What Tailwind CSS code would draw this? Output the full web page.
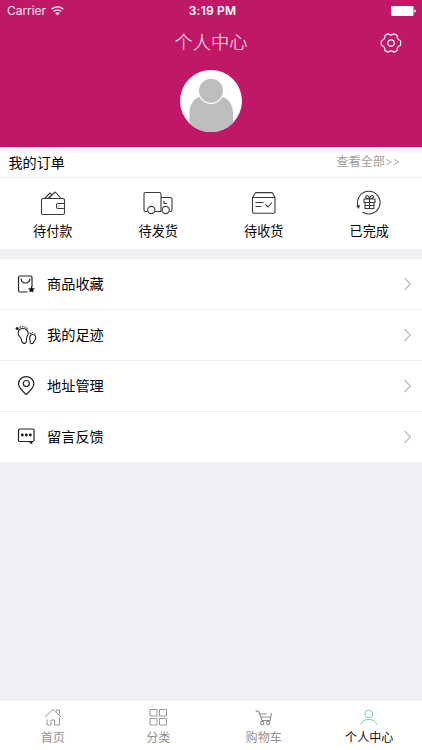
<!DOCTYPE html>
<html lang="zh-CN">
<head>
<meta charset="utf-8">
<meta name="viewport" content="width=device-width, initial-scale=1">
<title>个人中心</title>
<script src="https://cdn.jsdelivr.net/npm/@tailwindcss/browser@4"></script>
</head>
<body class="bg-[#efeff4]">
<div class="w-[422px] h-[750px] flex flex-col overflow-hidden bg-[#efeff4] text-black font-['Inter','Noto_Sans_CJK_SC',sans-serif]">
  <header class="h-[147px] shrink-0 bg-[#bf1866] text-white flex flex-col">
    <div class="h-[22px] grid grid-cols-3 items-center text-[12px] leading-[22px]">
      <div class="flex items-center pl-[7px] gap-[5px] text-white/90"><span class="tracking-[-0.05px]">Carrier</span>
        <svg class="w-[13px] h-[10px]" viewBox="0 0 13 10" fill="none" stroke="currentColor" stroke-width="1.5"><path d="M.7 3.2q5.8-4.7 11.6 0M2.7 5.5q3.8-3 7.6 0"/><path d="M4.2 7.1q2.3-1.6 4.6 0L6.5 9.5z" fill="currentColor" stroke="none"/></svg>
      </div>
      <div class="text-center font-semibold tracking-[0.2px] pl-[3px]">3:19 PM</div>
      <div class="flex justify-end pr-[6px]"><svg class="w-[25px] h-[10px]" viewBox="0 0 25 10" fill="white"><rect width="22.5" height="10" rx="1.2"/><path d="M23.3 3.2q1.5.3 1.5 1.8t-1.5 1.8z"/></svg></div>
    </div>
    <div class="h-[41px] grid grid-cols-3 items-center">
      <span></span>
      <h1 class="text-center text-[18.3px] leading-[41px] font-light whitespace-nowrap">个人中心</h1>
      <div class="flex justify-end pr-[20px]">
        <svg class="w-[22px] h-[22px]" viewBox="0 0 22 22" fill="none" stroke="white" stroke-width="1.2" stroke-linejoin="round"><path d="M8 1.800Q11 4.300 14 1.800L17.200 3.600Q16.500 7.200 20.600 8.700V13.300Q16.500 14.800 17.200 18.400L14 20.200Q11 17.700 8 20.200L4.800 18.400Q5.500 14.800 1.400 13.300V8.700Q5.500 7.200 4.800 3.600Z"/><circle cx="11" cy="11" r="3.2"/></svg>
      </div>
    </div>
    <div class="flex justify-center pt-[7px]">
      <div class="w-[62px] h-[62px] rounded-full bg-white overflow-hidden">
        <svg class="w-[62px] h-[62px]" viewBox="0 0 62 62"><path d="M9.500 62V43Q9.500 25 31 25T53 43V62z" fill="#bdbdbd"/><circle cx="31" cy="20.700" r="12.600" fill="#bdbdbd" stroke="white" stroke-width="1.200"/></svg>
      </div>
    </div>
  </header>

  <section class="h-[102px] shrink-0 bg-white">
    <div class="h-[31px] border-b border-[#efeff1] flex items-center justify-between pl-[8.500px] pr-[22px]">
      <h2 class="text-[14.1px] leading-[30px] pt-[1px]">我的订单</h2>
      <span class="text-[12.200px] text-[#a0a0a0] pt-[1px]">查看全部<span class="text-[11.500px] font-light">&gt;&gt;</span></span>
    </div>
    <div class="grid grid-cols-4 pt-[11px] text-[13.1px] leading-[20px]">
      <div class="flex flex-col items-center gap-[4px]">
        <svg class="w-[30px] h-[28px]" viewBox="38 189 30 28" fill="none" stroke="#3b3b3b" stroke-width="1.1" stroke-linejoin="round"><rect x="41.5" y="198.5" width="23" height="16" rx="1.5"/><path d="M44.5 198.5L50 193l2 1.8M48 198.500L55.200 192l6 6.500M49.500 198l3-3.500M64.500 203.500H58q-1.500 0-1.500 1.500v2q0 1.500 1.500 1.500h6.500M59 205.500v1"/></svg>
        <span>待付款</span>
      </div>
      <div class="flex flex-col items-center gap-[4px]">
        <svg class="w-[30px] h-[28px]" viewBox="143.500 189 30 28" fill="none" stroke="#3b3b3b" stroke-width="1.1" stroke-linejoin="round"><path d="M148 211.500h-2q-1.500 0-1.500-1.500v-16q0-1.500 1.500-1.500h14q1.500 0 1.500 1.500v17.500H155.500M161.500 197.500h9q2 0 2 2v10.500q0 1.500-1.500 1.500h-1.200M164.500 201v2.500h3"/><circle cx="151.800" cy="210" r="3.600"/><circle cx="166.200" cy="210" r="3.600" fill="white"/></svg>
        <span>待发货</span>
      </div>
      <div class="flex flex-col items-center gap-[4px]">
        <svg class="w-[30px] h-[28px]" viewBox="249 189 30 28" fill="none" stroke="#3b3b3b" stroke-width="1.1" stroke-linejoin="round"><path d="M252.500 197.500L255 193.500q.5-.9 1.500-.9h14.800q1 0 1.500.9l2.200 4v14.200q0 1.500-1.500 1.500h-19.500q-1.500 0-1.500-1.500zM252.500 197.500h22.500M255.500 202.500h8M255.500 206.500h6M265.500 204.500l2.500 2.500 4-4.500"/></svg>
        <span>待收货</span>
      </div>
      <div class="flex flex-col items-center gap-[4px]">
        <svg class="w-[30px] h-[28px]" viewBox="354.500 189 30 28" fill="none" stroke="#3b3b3b" stroke-width="1.1" stroke-linejoin="round"><path d="M358.500 206a11.300 11.300 0 1 1 4.500 6"/><path d="M356.500 205.800l4.200-.5-1.500 3.800z" fill="#3b3b3b" stroke="none"/><path d="M364.500 199h11v3.500h-11zM365.500 202.500v6h9v-6M370 199v9.500M370 199c-5 0-4.500-4-2-3.500q1.500.5 2 3.500c.5-3 1.500-3.500 2.500-3.500 2.500 0 2 3.500-2.500 3.500M365.500 205.500h9"/></svg>
        <span>已完成</span>
      </div>
    </div>
  </section>

  <nav class="mt-[10px] h-[203px] shrink-0 bg-white text-[14.2px]">
    <a class="h-[51px] border-b border-[#efeff1] flex items-center pl-[14px] pr-[10px]">
      <svg class="w-[24px] h-[24px] mr-[9px]" viewBox="14 272 24 24" fill="none" stroke="#222" stroke-width="1.2" stroke-linejoin="round"><path d="M32 287v-9.500q0-1.500-1.500-1.500H20q-1.500 0-1.500 1.500V290.500q0 1.500 1.500 1.500h7.500M21 278.500q.3 4.500 4.500 4.500t4.500-4.500"/><path d="M31.500 286l1 2.200 2.400.3-1.800 1.700.5 2.400-2.100-1.200-2.100 1.200.5-2.400-1.800-1.700 2.400-.3z" fill="#111" stroke="none"/></svg>
      <span class="flex-1">商品收藏</span>
      <svg class="w-[9px] h-[14px]" viewBox="0 0 9 14" fill="none" stroke="#bcbcc0" stroke-width="1.2"><path d="M1.500 1L7.300 7l-5.800 6"/></svg>
    </a>
    <a class="h-[51px] border-b border-[#efeff1] flex items-center pl-[14px] pr-[10px]">
      <svg class="w-[24px] h-[24px] mr-[9px]" viewBox="14 323 24 24" fill="none" stroke="#222" stroke-width="1.100"><path d="M23 328.500c3 0 5.300 2.300 5.200 5.200-.1 2.200-1.700 3-1.700 4.800 0 2.200.5 4.700-1.800 4.900-2.700.2-3.200-2-3.400-4.300-.2-2.300-3.200-2.600-3.200-5.800 0-2.800 2-4.800 4.900-4.800zM33 334.500c2.200.1 3 2.200 2.700 4-.3 1.500-1.300 1.800-1.600 2.900-.4 1.500-.8 2.300-2.300 2.200-1.600-.1-1.900-1.300-1.700-2.700.2-1.300-.6-1.700-.5-3 .2-1.900 1.300-3.500 3.400-3.400z"/><g fill="#222" stroke="none"><circle cx="17.200" cy="328.500" r="1.600"/><circle cx="20.200" cy="327" r=".8"/><circle cx="22.700" cy="326.500" r=".7"/><circle cx="25" cy="327" r=".7"/><circle cx="27" cy="328.200" r=".7"/><circle cx="30.500" cy="333.300" r=".9"/><circle cx="32.800" cy="332.500" r=".6"/><circle cx="35" cy="333.700" r=".6"/></g></svg>
      <span class="flex-1">我的足迹</span>
      <svg class="w-[9px] h-[14px]" viewBox="0 0 9 14" fill="none" stroke="#bcbcc0" stroke-width="1.2"><path d="M1.500 1L7.300 7l-5.800 6"/></svg>
    </a>
    <a class="h-[51px] border-b border-[#efeff1] flex items-center pl-[14px] pr-[10px]">
      <svg class="w-[24px] h-[24px] mr-[9px]" viewBox="14 374 24 24" fill="none" stroke="#222" stroke-width="1.200" stroke-linejoin="round"><path d="M26.200 394.500q-7.700-6.800-7.700-10.700a7.700 7.200 0 0 1 15.400 0q0 3.900-7.700 10.700z"/><circle cx="26.300" cy="383.500" r="3"/></svg>
      <span class="flex-1">地址管理</span>
      <svg class="w-[9px] h-[14px]" viewBox="0 0 9 14" fill="none" stroke="#bcbcc0" stroke-width="1.2"><path d="M1.500 1L7.300 7l-5.800 6"/></svg>
    </a>
    <a class="h-[50px] flex items-center pl-[14px] pr-[10px]">
      <svg class="w-[24px] h-[24px] mr-[9px]" viewBox="14 425 24 24" fill="none" stroke="#222" stroke-width="1.200" stroke-linejoin="round"><rect x="18.500" y="429" width="15.500" height="12.500" rx="1.200"/><path d="M28.500 441.500h3.500v2.500z" fill="#222" stroke-width=".7"/><g fill="#111" stroke="none"><circle cx="22.300" cy="435" r="1.400"/><circle cx="26.300" cy="435" r="1.400"/><circle cx="30.300" cy="435" r="1.400"/></g></svg>
      <span class="flex-1">留言反馈</span>
      <svg class="w-[9px] h-[14px]" viewBox="0 0 9 14" fill="none" stroke="#bcbcc0" stroke-width="1.2"><path d="M1.500 1L7.300 7l-5.800 6"/></svg>
    </a>
  </nav>

  <footer class="mt-auto h-[49px] shrink-0 bg-white grid grid-cols-4 pt-[6px] text-[12.100px] leading-[18px] text-[#929292]">
    <div class="flex flex-col items-center gap-[2px]">
      <svg class="w-[20px] h-[20px]" viewBox="43 707 20 20" fill="none" stroke="#999" stroke-width="1"><path d="M45 717l8-7.500 8 7.500M56.500 711.500v-1.500h3v4.500M47 719.500v5.500h4v-5h3.500v5h5v-7.500"/></svg>
      <span>首页</span>
    </div>
    <div class="flex flex-col items-center gap-[2px]">
      <svg class="w-[20px] h-[20px]" viewBox="148.500 707 20 20" fill="none" stroke="#999" stroke-width="1"><path d="M150.500 709.500h7v6.500h-7zM160 709.500h7v6.500h-7zM150.500 718.500h7v6.500h-7zM160 718.500h7v6.500h-7z"/></svg>
      <span>分类</span>
    </div>
    <div class="flex flex-col items-center gap-[2px]">
      <svg class="w-[20px] h-[20px]" viewBox="254 707 20 20" fill="none" stroke="#8d8d8d" stroke-width="1.100"><path d="M255.500 710.500l3.500 1.500 3 8.500h8l1.500-7.500M260 714h6.500M261 717h10"/><circle cx="262.200" cy="723" r="1.600"/><circle cx="268.300" cy="723" r="1.600"/></svg>
      <span>购物车</span>
    </div>
    <div class="flex flex-col items-center gap-[2px] text-[#111]">
      <svg class="w-[20px] h-[20px]" viewBox="359.500 707 20 20" fill="none" stroke="#74cfaa" stroke-width="1"><circle cx="369.300" cy="714" r="3.900"/><path d="M361.300 724.500q1.500-5 8-5t8 5"/></svg>
      <span>个人中心</span>
    </div>
  </footer>
</div>
</body>
</html>
